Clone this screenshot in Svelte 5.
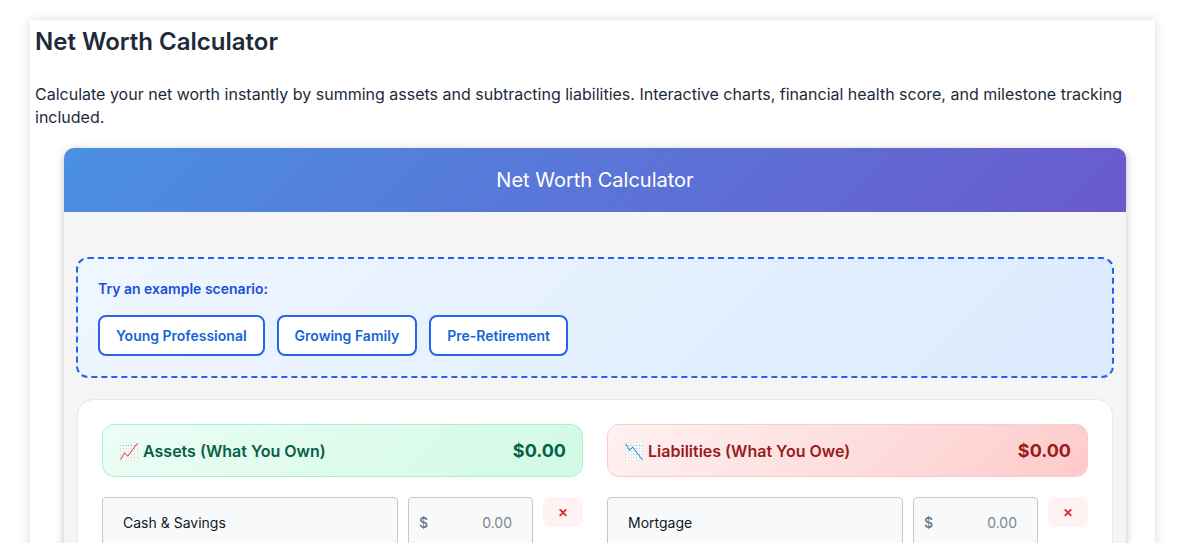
<script>
  const scenarios = ["Young Professional", "Growing Family", "Pre-Retirement"];

  const columns = [
    {
      kind: "assets",
      icon: "📈",
      title: "Assets (What You Own)",
      rows: ["Cash & Savings", "Investments", "Retirement Accounts", "Real Estate", "Vehicles"],
    },
    {
      kind: "liabilities",
      icon: "📉",
      title: "Liabilities (What You Owe)",
      rows: ["Mortgage", "Auto Loans", "Student Loans", "Credit Cards", "Other Debts"],
    },
  ];
</script>

<main class="page">
  <h2>Net Worth Calculator</h2>
  <p class="intro">
    Calculate your net worth instantly by summing assets and subtracting liabilities. Interactive charts, financial
    health score, and milestone tracking included.
  </p>

  <section class="calculator">
    <header class="calc-header">Net Worth Calculator</header>

    <div class="calc-body">
      <div class="examples">
        <div class="examples-title">Try an example scenario:</div>
        <div class="example-buttons">
          {#each scenarios as name}
            <button class="example">{name}</button>
          {/each}
        </div>
      </div>

      <div class="sheet">
        {#each columns as col}
          <div class="column {col.kind}">
            <div class="summary">
              <span class="summary-title">{col.icon} {col.title}</span>
              <span class="summary-total">$0.00</span>
            </div>
            {#each col.rows as row}
              <div class="row">
                <input class="name" type="text" value={row} />
                <div class="amount">
                  <span class="currency">$</span>
                  <input type="text" placeholder="0.00" />
                </div>
                <button class="remove">✕</button>
              </div>
            {/each}
          </div>
        {/each}
      </div>
    </div>
  </section>
</main>

<style>
  :global(body) {
    background: #fff;
    font-family: Inter, "Liberation Sans", sans-serif;
    color: #1e293b;
  }

  .page {
    box-sizing: border-box;
    width: 1125px;
    min-height: 6400px;
    margin: 20px 30px;
    padding: 5px 5px 40px;
    background: #fff;
    box-shadow: 0 0 10px rgba(0, 0, 0, 0.15);
  }

  h2 {
    margin: 0;
    font-size: 24px;
    line-height: 34px;
    font-weight: 600;
    color: #1e293b;
  }

  .intro {
    margin: 24px 0 19px;
    font-size: 16px;
    line-height: 23px;
    color: #1e293b;
  }

  .calculator {
    width: 1062px;
    margin-left: 29px;
    border-radius: 10px;
    background: #f5f5f5;
    box-shadow: 0 2px 8px rgba(0, 0, 0, 0.25);
    overflow: hidden;
  }

  .calc-header {
    height: 64px;
    line-height: 64px;
    text-align: center;
    font-size: 20px;
    color: #fff;
    background: linear-gradient(135deg, #4a90e2, #6a5acd);
  }

  .calc-body {
    padding: 45px 12px 24px;
  }

  .examples {
    padding: 20px;
    border: 2px dashed #2563eb;
    border-radius: 12px;
    background: linear-gradient(135deg, #eff6ff, #dbeafe);
  }

  .examples-title {
    margin-bottom: 16px;
    font-size: 14px;
    line-height: 20px;
    font-weight: 600;
    color: #1d4ed8;
  }

  .example-buttons {
    display: flex;
    gap: 12px;
  }

  .example {
    height: 41px;
    padding: 0 16px;
    border: 2px solid #2563eb;
    border-radius: 8px;
    background: #fff;
    font-family: inherit;
    font-size: 14px;
    font-weight: 600;
    color: #1565d8;
  }

  .sheet {
    display: grid;
    grid-template-columns: 1fr 1fr;
    gap: 24px;
    margin: 21px 1px 0;
    padding: 24px;
    border: 1px solid #e2e8f0;
    border-radius: 16px;
    background: #fff;
  }

  .summary {
    display: flex;
    justify-content: space-between;
    align-items: center;
    box-sizing: border-box;
    height: 53px;
    padding: 0 16px;
    margin-bottom: 20px;
    border-radius: 12px;
    border: 1px solid;
  }

  .assets .summary {
    border-color: #a7f3d0;
    color: #065f46;
    background: linear-gradient(135deg, #ecfdf5, #d1fae5);
  }

  .liabilities .summary {
    border-color: #fecaca;
    color: #991b1b;
    background: linear-gradient(135deg, #fef2f2, #fecaca);
  }

  .summary-title {
    font-size: 16px;
    font-weight: 600;
  }

  .summary-total {
    font-size: 18px;
    font-weight: 700;
  }

  .row {
    display: grid;
    grid-template-columns: 296px 125px 40px;
    justify-content: space-between;
    align-items: center;
    margin-bottom: 12px;
  }

  .row input {
    font-family: inherit;
    font-size: 14px;
    outline: none;
  }

  .name {
    box-sizing: border-box;
    width: 296px;
    height: 50px;
    padding: 0 20px;
    border: 1px solid #c8c8c8;
    border-radius: 4px;
    background: #f8f9fb;
    color: #111827;
  }

  .amount {
    display: flex;
    align-items: center;
    box-sizing: border-box;
    height: 50px;
    padding: 0 20px 0 10px;
    border: 1px solid #c8c8c8;
    border-radius: 4px;
    background: #f8f9fb;
  }

  .currency {
    font-size: 14px;
    font-weight: 500;
    color: #64748b;
  }

  .amount input {
    flex: 1;
    min-width: 0;
    border: 0;
    padding: 0;
    background: transparent;
    text-align: right;
  }

  .amount input::placeholder {
    color: #7d8590;
  }

  .remove {
    height: 30px;
    margin-top: -20px;
    border: 0;
    border-radius: 8px;
    background: #fef2f2;
    color: #dc2626;
    font-family: inherit;
    font-size: 12px;
    font-weight: 700;
  }
</style>
